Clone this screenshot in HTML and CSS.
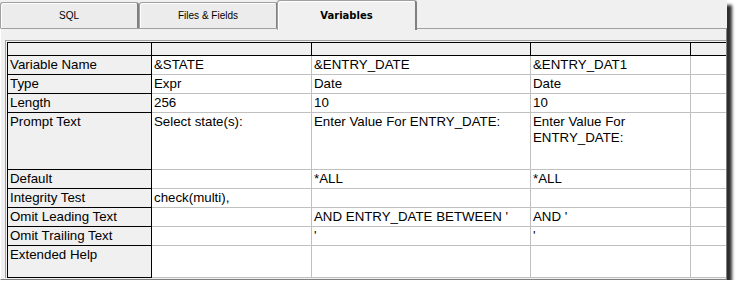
FILE: index.html
```html
<!DOCTYPE html>
<html>
<head>
<meta charset="utf-8">
<link rel="stylesheet" href="styles.css">
</head>
<body>
<div class="window">
  <div class="tabs">
    <div class="tab first">SQL</div>
    <div class="tab">Files &amp; Fields</div>
    <div class="tab active">Variables</div>
  </div>
  <div class="panel">
    <div class="frame">
      <div class="grid">
        <div class="c h l"></div><div class="c h"></div><div class="c h"></div><div class="c h"></div><div class="c h"></div>

        <div class="c l">Variable Name</div><div class="c">&amp;STATE</div><div class="c">&amp;ENTRY_DATE</div><div class="c">&amp;ENTRY_DAT1</div><div class="c"></div>

        <div class="c l">Type</div><div class="c">Expr</div><div class="c">Date</div><div class="c">Date</div><div class="c"></div>

        <div class="c l">Length</div><div class="c">256</div><div class="c">10</div><div class="c">10</div><div class="c"></div>

        <div class="c l">Prompt Text</div><div class="c">Select state(s):</div><div class="c">Enter Value For ENTRY_DATE:</div><div class="c">Enter Value For ENTRY_DATE:</div><div class="c"></div>

        <div class="c l">Default</div><div class="c"></div><div class="c">*ALL</div><div class="c">*ALL</div><div class="c"></div>

        <div class="c l">Integrity Test</div><div class="c">check(multi),</div><div class="c"></div><div class="c"></div><div class="c"></div>

        <div class="c l">Omit Leading Text</div><div class="c"></div><div class="c">AND ENTRY_DATE BETWEEN '</div><div class="c">AND '</div><div class="c"></div>

        <div class="c l">Omit Trailing Text</div><div class="c"></div><div class="c">'</div><div class="c">'</div><div class="c"></div>

        <div class="c l">Extended Help</div><div class="c"></div><div class="c"></div><div class="c"></div><div class="c"></div>
      </div>
    </div>
  </div>
</div>
</body>
</html>
```
FILE: styles.css
```css
html, body {
  margin: 0;
  padding: 0;
  background: #ffffff;
}

.window {
  width: 727px;
  height: 280px;
  background: #f0f0f0;
  box-shadow: 5px 5px 3px rgba(0, 0, 0, 0.82);
  display: flex;
  flex-direction: column;
  overflow: hidden;
}

.tabs {
  height: 28px;
  display: flex;
  align-items: flex-end;
  flex: none;
}

.tab {
  box-sizing: border-box;
  height: 26px;
  width: 139px;
  border: 1px solid #a0a0a0;
  border-bottom: none;
  border-right: 2px solid #808080;
  border-radius: 3px 3px 0 0;
  box-shadow: inset 1px 1px 0 #ffffff;
  background: #ececec;
  font-family: "Liberation Sans", Arial, sans-serif;
  font-size: 10px;
  line-height: 12px;
  text-align: center;
  padding-top: 7px;
  color: #000;
}

.tab.active {
  height: 30px;
  width: 140px;
  margin-bottom: -2px;
  margin-left: -1px;
  background: #f0f0f0;
  font-family: "DejaVu Sans", sans-serif;
  font-weight: bold;
  padding-top: 9px;
  position: relative;
  z-index: 2;
}

.panel {
  flex: 1;
  box-sizing: border-box;
  border-top: 1px solid #a0a0a0;
  border-left: 1px solid #ffffff;
  border-right: 1px solid #808080;
  border-bottom: 1px solid #808080;
  padding: 11px 0 0 4px;
  overflow: hidden;
  position: relative;
  z-index: 1;
}

.frame {
  border-top: 1px solid #a0a0a0;
  border-left: 1px solid #a0a0a0;
  padding: 1px 0 0 1px;
}

.grid {
  display: grid;
  grid-template-columns: 144px 160px 219px 160px 60px;
  grid-template-rows: 13px 19px 19px 19px 57px 19px 19px 19px 19px 32px;
  border-top: 1px solid #000;
  border-left: 1px solid #000;
  width: max-content;
  font-family: "Liberation Sans", Arial, sans-serif;
  font-size: 13.3px;
  line-height: 16px;
  color: #000;
}

.c {
  box-sizing: border-box;
  background: #ffffff;
  border-right: 1px solid #c0c0c0;
  border-bottom: 1px solid #c0c0c0;
  padding: 1px 2px 0 2px;
  overflow: hidden;
}

.c.h,
.c.l {
  background: #f0f0f0;
  border-color: #000;
}

.c.h {
  padding: 0;
}
```
